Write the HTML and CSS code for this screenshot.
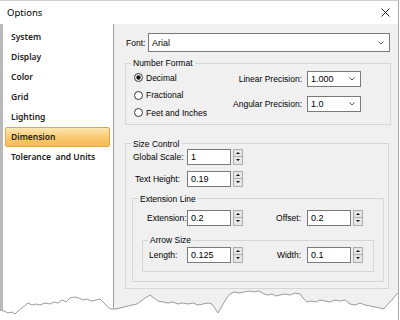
FILE: index.html
```html
<!DOCTYPE html>
<html lang="en">
<head>
    <meta charset="UTF-8">
    <title>Options</title>
    <link rel="stylesheet" href="styles.css">
</head>
<body>

    <div class="window">
        <div class="titlebar">
            <span class="title">Options</span>
            <svg class="close" width="9" height="9" viewBox="0 0 9 9">
                <path d="M0.5 0.5 L8.5 8.5 M8.5 0.5 L0.5 8.5" stroke="#222" stroke-width="1" fill="none"/>
            </svg>
        </div>

        <div class="body">
            <ul class="nav">
                <li>System</li>
                <li>Display</li>
                <li>Color</li>
                <li>Grid</li>
                <li>Lighting</li>
                <li class="active">Dimension</li>
                <li>Tolerance&nbsp; and Units</li>
            </ul>

            <div class="page">
                <div class="font-row">
                    <label>Font:</label>
                    <div class="combo font-combo">
                        <span>Arial</span>
                        <svg class="chev" width="6" height="4" viewBox="0 0 6 4"><path d="M0.5 0.5 L3 3 L5.5 0.5" stroke="#555" fill="none"/></svg>
                    </div>
                </div>

                <fieldset class="group nf">
                    <legend>Number Format</legend>
                    <div class="nf-body">
                        <div class="radios">
                            <div class="radio">
                                <svg width="9" height="9" viewBox="0 0 9 9"><circle cx="4.5" cy="4.5" r="4" fill="#fff" stroke="#333"/><circle cx="4.5" cy="4.5" r="2.2" fill="#111"/></svg>
                                <span>Decimal</span>
                            </div>
                            <div class="radio">
                                <svg width="9" height="9" viewBox="0 0 9 9"><circle cx="4.5" cy="4.5" r="4" fill="#fff" stroke="#333"/></svg>
                                <span>Fractional</span>
                            </div>
                            <div class="radio">
                                <svg width="9" height="9" viewBox="0 0 9 9"><circle cx="4.5" cy="4.5" r="4" fill="#fff" stroke="#333"/></svg>
                                <span>Feet and Inches</span>
                            </div>
                        </div>
                        <div class="precision">
                            <span class="lbl">Linear Precision:</span>
                            <div class="combo small-combo">
                                <span>1.000</span>
                                <svg class="chev" width="6" height="4" viewBox="0 0 6 4"><path d="M0.5 0.5 L3 3 L5.5 0.5" stroke="#555" fill="none"/></svg>
                            </div>
                            <span class="lbl">Angular Precision:</span>
                            <div class="combo small-combo">
                                <span>1.0</span>
                                <svg class="chev" width="6" height="4" viewBox="0 0 6 4"><path d="M0.5 0.5 L3 3 L5.5 0.5" stroke="#555" fill="none"/></svg>
                            </div>
                        </div>
                    </div>
                </fieldset>

                <fieldset class="group sc">
                    <legend>Size Control</legend>
                    <div class="sc-body">
                        <div class="row">
                            <span class="lbl w54">Global Scale:</span>
                            <div class="field">1</div>
                            <div class="spin"><span><i class="up"></i></span><span><i class="down"></i></span></div>
                        </div>
                        <div class="row gap6">
                            <span class="lbl w54 indent">Text Height:</span>
                            <div class="field">0.19</div>
                            <div class="spin"><span><i class="up"></i></span><span><i class="down"></i></span></div>
                        </div>

                        <fieldset class="group ext">
                            <legend>Extension Line</legend>
                            <div class="ext-body">
                                <div class="row">
                                    <span class="lbl w40">Extension:</span>
                                    <div class="field">0.2</div>
                                    <div class="spin"><span><i class="up"></i></span><span><i class="down"></i></span></div>
                                    <span class="lbl right">Offset:</span>
                                    <div class="field">0.2</div>
                                    <div class="spin"><span><i class="up"></i></span><span><i class="down"></i></span></div>
                                </div>

                                <fieldset class="group arrow">
                                    <legend>Arrow Size</legend>
                                    <div class="arrow-body">
                                        <div class="row">
                                            <span class="lbl w38">Length:</span>
                                            <div class="field">0.125</div>
                                            <div class="spin"><span><i class="up"></i></span><span><i class="down"></i></span></div>
                                            <span class="lbl right">Width:</span>
                                            <div class="field">0.1</div>
                                            <div class="spin"><span><i class="up"></i></span><span><i class="down"></i></span></div>
                                        </div>
                                    </div>
                                </fieldset>
                            </div>
                        </fieldset>
                    </div>
                </fieldset>
            </div>
        </div>

        <!-- torn-paper edge over the bottom of the screenshot -->
        <svg class="tear" width="400" height="36" viewBox="0 285 400 36">
            <polygon fill="#fff" points="0,310 4,311 8,313 12,312 15,314 19,310 23,307 28,303 32,305 36,304 40,305 45,303 50,304 54,302 58,303 62,300 66,302 70,298 75,297 79,298 83,300 87,299 91,301 96,300 100,299 104,303 108,307 111,309 116,309 120,308 124,307 128,306 132,305 137,304 141,301 145,298 150,295 154,298 158,301 163,302 168,303 173,302 178,304 183,303 188,304 193,303 198,305 203,304 208,303 212,304 216,310 218,313 222,306 226,299 230,294 234,292 239,293 244,292 249,291 254,292 259,291 264,294 268,295 272,294 276,296 280,295 285,294 290,295 295,293 300,294 303,298 307,302 311,301 316,302 320,300 325,301 330,302 335,300 340,301 345,300 350,304 355,305 360,303 365,305 370,306 375,307 380,308 384,309 388,304 392,300 395,296 398,293 400,292 400,321 0,321"/>
            <polyline fill="none" stroke="#9c9c9c" stroke-width="1" points="0,310 4,311 8,313 12,312 15,314 19,310 23,307 28,303 32,305 36,304 40,305 45,303 50,304 54,302 58,303 62,300 66,302 70,298 75,297 79,298 83,300 87,299 91,301 96,300 100,299 104,303 108,307 111,309 116,309 120,308 124,307 128,306 132,305 137,304 141,301 145,298 150,295 154,298 158,301 163,302 168,303 173,302 178,304 183,303 188,304 193,303 198,305 203,304 208,303 212,304 216,310 218,313 222,306 226,299 230,294 234,292 239,293 244,292 249,291 254,292 259,291 264,294 268,295 272,294 276,296 280,295 285,294 290,295 295,293 300,294 303,298 307,302 311,301 316,302 320,300 325,301 330,302 335,300 340,301 345,300 350,304 355,305 360,303 365,305 370,306 375,307 380,308 384,309 388,304 392,300 395,296 398,293 400,292"/>
        </svg>
    </div>

</body>
</html>
```

FILE: styles.css
```css
body {
    margin: 0;
    background-color: #fff;
}

.window {
    position: relative;
    width: 399px;
    height: 320px;
    box-sizing: border-box;
    border-top: 1px solid #d0d0d0;
    border-right: 1px solid #a9a9a9;
    background-color: #fff;
    overflow: hidden;
}

.titlebar {
    height: 23px;
    display: flex;
    align-items: center;
    justify-content: space-between;
    padding: 0 8px 0 7px;
    font: 9.5px "Noto Sans", sans-serif;
    color: #000;
}

.body {
    display: flex;
    height: 296px;
    background-color: #f0f0f0;
}

/* left category list */
.nav {
    width: 114px;
    box-sizing: border-box;
    margin: 0;
    padding: 3px 0 0 0;
    list-style: none;
    background-color: #fff;
    border-left: 3px solid #b8b8b8;
    border-right: 1px solid #a0a0a0;
}

.nav li {
    width: 105px;
    height: 20px;
    box-sizing: border-box;
    margin-left: 2px;
    padding-left: 5px;
    border: 1px solid transparent;
    border-radius: 2px;
    line-height: 18px;
    font: 600 8.5px/18px "Noto Sans", sans-serif;
    color: #222;
}

.nav li.active {
    background: linear-gradient(#fde7b2, #f8c66a 60%, #f6bc58);
    border-color: #e3a748;
}

/* right options page */
.page {
    flex: 1;
    padding: 9px 0 0 11px;
    font: 8.5px "Liberation Sans", Arial, sans-serif;
    color: #000;
}

.font-row {
    display: flex;
    align-items: center;
    height: 19px;
}

.font-row label {
    width: 23px;
    padding-left: 1px;
    box-sizing: border-box;
}

.combo {
    display: flex;
    align-items: center;
    justify-content: space-between;
    box-sizing: border-box;
    background-color: #fff;
    border: 1px solid #7a7a7a;
    padding: 0 5px 0 3px;
    font-size: 9px;
}

.font-combo {
    width: 242px;
    height: 19px;
}

.small-combo {
    width: 54px;
    height: 16px;
}

.group {
    margin: 0;
    padding: 0;
    min-width: 0;
    box-sizing: border-box;
    border: 1px solid #d6d6d6;
}

.group legend {
    margin-left: 5px;
    padding: 0 2px;
    line-height: 10px;
}

.nf {
    width: 266px;
    margin-top: 6px;
}

.nf-body {
    display: flex;
    justify-content: space-between;
    padding: 1px 29px 2px 8px;
}

.radio {
    display: flex;
    align-items: center;
    gap: 3px;
    height: 17.5px;
}

.precision {
    display: grid;
    grid-template-columns: auto 54px;
    column-gap: 5px;
    row-gap: 9px;
    align-items: center;
    align-self: flex-start;
    margin-top: 2px;
}

.precision .lbl {
    text-align: right;
}

.sc {
    width: 264px;
    margin-top: 14px;
}

.sc-body {
    padding: 0 0 6px 7px;
}

.row {
    display: flex;
    align-items: center;
    height: 16px;
}

.gap6 {
    margin-top: 6px;
}

.w54 { width: 54px; }
.w40 { width: 40px; }
.w38 { width: 38px; }

.indent {
    padding-left: 2px;
    box-sizing: border-box;
}

.lbl.right {
    width: 64px;
    padding-right: 6px;
    box-sizing: border-box;
    text-align: right;
}

.field {
    width: 44px;
    height: 16px;
    box-sizing: border-box;
    background-color: #fff;
    border: 1px solid #7a7a7a;
    padding-left: 3px;
    font-size: 9px;
    line-height: 14px;
}

.spin {
    display: flex;
    flex-direction: column;
    width: 10px;
    height: 16px;
    margin-left: 2px;
}

.spin span {
    flex: 1;
    display: flex;
    align-items: center;
    justify-content: center;
    background-color: #e6e6e6;
    border: 1px solid #adadad;
}

.spin span + span {
    border-top: none;
}

.spin .up {
    border-left: 2px solid transparent;
    border-right: 2px solid transparent;
    border-bottom: 2px solid #111;
}

.spin .down {
    border-left: 2px solid transparent;
    border-right: 2px solid transparent;
    border-top: 2px solid #111;
}

.ext {
    width: 252px;
    margin: 7px 0 0 -1px;
}

.ext-body {
    padding: 6px 0 9px 14px;
}

.arrow {
    width: 232px;
    margin: 9.5px 0 0 -5px;
}

.arrow-body {
    padding: 1.5px 0 8px 6px;
}

.tear {
    position: absolute;
    left: 0;
    bottom: -1px;
}
```
